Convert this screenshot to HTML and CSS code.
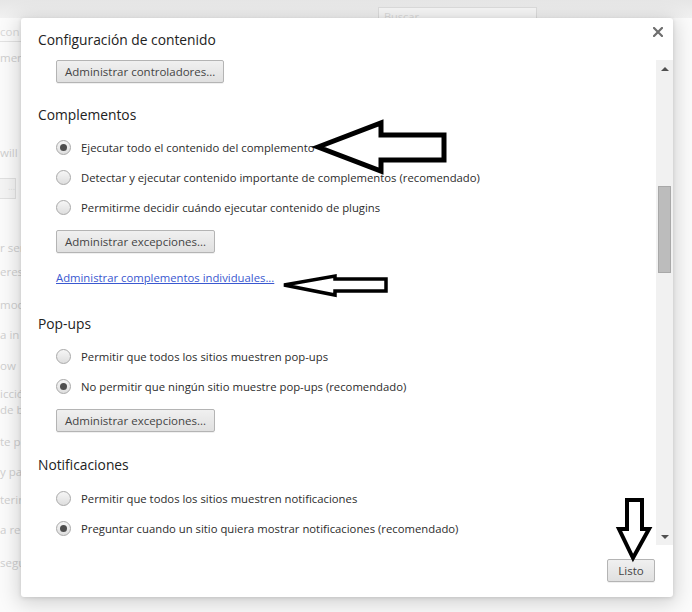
FILE: index.html
```html
<!DOCTYPE html>
<html lang="es">
<head>
<meta charset="utf-8">
<title>Configuración de contenido</title>
<link rel="stylesheet" href="styles.css">
</head>
<body>
<div class="page">
  <div class="topbar"><div class="search">Buscar</div></div>
  <div class="bg-col">
    <div class="bg-head">con</div>
    <div class="bg-line l1">ment</div>
    <div class="bg-line l2">will b</div>
    <div class="bg-btns"><span class="bg-btn">...</span></div>
    <div class="bg-line l3">r ser</div>
    <div class="bg-line l4">eres</div>
    <div class="bg-line l5">mode</div>
    <div class="bg-line l6">a in</div>
    <div class="bg-line l7">ow</div>
    <div class="bg-line l8">icció</div>
    <div class="bg-line l9">de b</div>
    <div class="bg-line l10">te p</div>
    <div class="bg-line l11">y pa</div>
    <div class="bg-line l12">terin</div>
    <div class="bg-line l13">a re</div>
    <div class="bg-line l14">segu</div>
  </div>
</div>

<div class="dialog">
  <div class="dlg-head">
    <h1 class="dlg-title">Configuración de contenido</h1>
    <button class="close" aria-label="Cerrar">
      <svg width="10" height="10" viewBox="0 0 10 10"><path d="M1 1L9 9M9 1L1 9" stroke="#6e6e6e" stroke-width="2.2" stroke-linecap="square"/></svg>
    </button>
  </div>
  <div class="dlg-body">
    <div class="content">
      <div class="btn-row first"><button class="btn">Administrar controladores...</button></div>

      <section class="sec">
        <h2 class="sec-title">Complementos</h2>
        <div class="options">
          <label class="opt"><span class="radio on"></span>Ejecutar todo el contenido del complemento</label>
          <label class="opt"><span class="radio"></span>Detectar y ejecutar contenido importante de complementos (recomendado)</label>
          <label class="opt"><span class="radio"></span>Permitirme decidir cuándo ejecutar contenido de plugins</label>
        </div>
        <div class="btn-row"><button class="btn">Administrar excepciones...</button></div>
        <div class="link-row"><a class="link" href="#">Administrar complementos individuales...</a></div>
      </section>

      <section class="sec popups">
        <h2 class="sec-title">Pop-ups</h2>
        <div class="options">
          <label class="opt"><span class="radio"></span>Permitir que todos los sitios muestren pop-ups</label>
          <label class="opt"><span class="radio on"></span>No permitir que ningún sitio muestre pop-ups (recomendado)</label>
        </div>
        <div class="btn-row"><button class="btn">Administrar excepciones...</button></div>
      </section>

      <section class="sec notif">
        <h2 class="sec-title">Notificaciones</h2>
        <div class="options">
          <label class="opt"><span class="radio"></span>Permitir que todos los sitios muestren notificaciones</label>
          <label class="opt"><span class="radio on"></span>Preguntar cuando un sitio quiera mostrar notificaciones (recomendado)</label>
        </div>
      </section>
    </div>
    <div class="scrollbar">
      <div class="sb-arrow up"></div>
      <div class="sb-track"><div class="sb-thumb"></div></div>
      <div class="sb-arrow down"></div>
    </div>
  </div>
  <div class="dlg-foot">
    <button class="btn listo">Listo</button>
  </div>
</div>

<svg class="annot" width="692" height="612" viewBox="0 0 692 612">
  <polygon points="318,147 381,123 381,135 444,135 444,160 381,160 381,171" fill="#fff" stroke="#000" stroke-width="5" stroke-linejoin="miter"/>
  <polygon points="284,285 335,276 335,279 386,279 386,291 335,291 335,295" fill="#fff" stroke="#000" stroke-width="3.5" stroke-linejoin="miter"/>
  <polygon points="633,558 619,529 627,529 627,500 642,500 642,529 649,529" fill="#fff" stroke="#000" stroke-width="4" stroke-linejoin="miter"/>
</svg>
</body>
</html>
```

FILE: styles.css
```css
* { box-sizing: border-box; }
html, body {
  margin: 0;
  padding: 0;
}
body {
  width: 692px;
  height: 612px;
  overflow: hidden;
  position: relative;
  background: #fbfbfb;
  font-family: "Open Sans", "Noto Sans", "Liberation Sans", sans-serif;
  color: #333;
}

/* faded page behind the dialog */
.page {
  position: absolute;
  inset: 0;
}
.topbar {
  height: 18px;
  background: linear-gradient(#e6e6e6, #f1f1f1);
  padding-left: 378px;
  padding-top: 7px;
}
.search {
  width: 159px;
  height: 11px;
  border: 1px solid #dcdcdc;
  border-bottom: none;
  background: #f6f6f6;
  color: #dadada;
  font-size: 11px;
  line-height: 17px;
  padding-left: 5px;
  overflow: hidden;
}
.bg-col {
  width: 21px;
  overflow: hidden;
  color: #cfcfcf;
  font-size: 11.5px;
  line-height: 16px;
  white-space: nowrap;
}
.bg-head {
  margin-top: 6px;
  height: 18px;
  border-bottom: 1px solid #e2e2e2;
  color: #d8d8d8;
}
.bg-line { width: 21px; }
.l1 { margin-top: 8px; }
.l2 { margin-top: 79px; }
.bg-btns { margin-top: 17px; height: 21px; }
.bg-btn {
  display: block;
  width: 16px;
  height: 21px;
  border: 1px solid #e0e0e0;
  border-left: none;
  background: #f4f4f4;
  color: #ddd;
  font-size: 9px;
  text-align: right;
}
.l3 { margin-top: 41px; }
.l4 { margin-top: 8px; }
.l5 { margin-top: 17px; }
.l6 { margin-top: 14px; }
.l7 { margin-top: 15px; }
.l8 { margin-top: 12px; }
.l9 { margin-top: 0; }
.l10 { margin-top: 16px; }
.l11 { margin-top: 14px; }
.l12 { margin-top: 12px; }
.l13 { margin-top: 14px; }
.l14 { margin-top: 17px; }

/* dialog */
.dialog {
  position: absolute;
  left: 21px;
  top: 18px;
  width: 652px;
  height: 579px;
  background: #fff;
  border-radius: 3px;
  box-shadow: 0 4px 20px 3px rgba(0, 0, 0, 0.16), 0 1px 4px rgba(0, 0, 0, 0.12);
  display: flex;
  flex-direction: column;
}
.dlg-head {
  height: 42px;
  flex: none;
  display: flex;
  align-items: flex-start;
  padding-left: 17px;
  padding-right: 10px;
}
.dlg-title {
  flex: 1;
  margin: 0;
  padding-top: 12px;
  font-weight: normal;
  font-size: 13.8px;
  line-height: 20px;
  color: #222;
}
.close {
  margin-top: 9px;
  width: 10px;
  height: 10px;
  padding: 0;
  border: none;
  background: none;
  display: flex;
}

.dlg-body {
  height: 485px;
  flex: none;
  display: flex;
}
.content {
  flex: 1;
  overflow: hidden;
  padding-left: 17px;
  font-size: 11.3px;
  color: #2c2c2c;
}
.btn-row { padding-left: 18px; margin-top: 8px; }
.btn-row.first { margin-top: 0; }
.btn {
  height: 23px;
  padding: 0 8px;
  border: 1px solid #b4b4b4;
  border-radius: 2px;
  background: linear-gradient(#f0f0f0, #e0e0e0);
  box-shadow: 0 1px 0 rgba(0, 0, 0, 0.06);
  font-family: inherit;
  font-size: 11.5px;
  color: #444;
  line-height: 20px;
}
.sec { margin-top: 22px; }
.sec.popups { margin-top: 27px; }
.sec.notif { margin-top: 23px; }
.sec-title {
  margin: 0;
  font-weight: normal;
  font-size: 13.8px;
  line-height: 20px;
  color: #222;
}
.options { margin-top: 7px; padding-left: 18px; }
.notif .options { margin-top: 8px; }
.opt {
  height: 30px;
  display: flex;
  align-items: center;
  gap: 10px;
  white-space: nowrap;
}
.radio {
  width: 15px;
  height: 15px;
  flex: none;
  border-radius: 50%;
  border: 1px solid #a9a9a9;
  background: linear-gradient(#f6f6f6, #dedede);
  display: flex;
  align-items: center;
  justify-content: center;
}
.radio.on::after {
  content: "";
  width: 7px;
  height: 7px;
  border-radius: 50%;
  background: #4e4e4e;
}
.link-row { margin-top: 16px; padding-left: 18px; line-height: 18px; }
.link {
  color: #3a58d0;
  text-decoration: underline;
  font-size: 11.3px;
}

.scrollbar {
  width: 17px;
  flex: none;
  background: #f1f1f1;
  display: flex;
  flex-direction: column;
  align-items: center;
}
.sb-arrow {
  height: 17px;
  width: 17px;
  flex: none;
  display: flex;
  align-items: center;
  justify-content: center;
}
.sb-arrow::after {
  content: "";
  border-left: 4px solid transparent;
  border-right: 4px solid transparent;
}
.sb-arrow.up::after { border-bottom: 4px solid #505050; }
.sb-arrow.down::after { border-top: 4px solid #505050; }
.sb-track { flex: 1; width: 100%; padding-top: 109px; }
.sb-thumb {
  margin: 0 2px;
  height: 87px;
  background: #bcbcbc;
  border: 1px solid #a8a8a8;
}

.dlg-foot {
  flex: 1;
  display: flex;
  justify-content: flex-end;
  align-items: flex-start;
  padding: 14px 18px 0 0;
}
.btn.listo { width: 48px; padding: 0; }

.annot {
  position: absolute;
  left: 0;
  top: 0;
  pointer-events: none;
}
```
